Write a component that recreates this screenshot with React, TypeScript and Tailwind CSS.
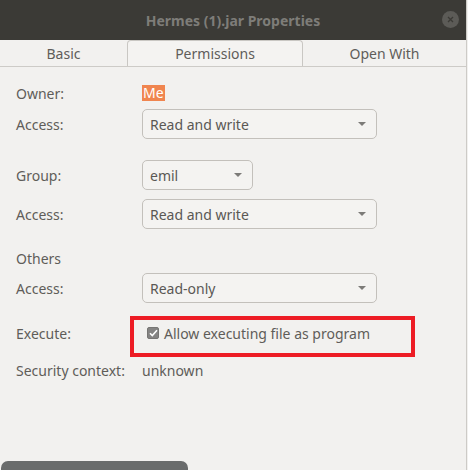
import React from 'react';

const font = { fontFamily: '"Noto Sans", "Open Sans", sans-serif' };

function Combo({ value, width }: { value: string; width: string }) {
  return (
    <div
      className={`${width} h-[30px] flex items-center justify-between pl-[7px] pr-[9px] rounded-[5px] border border-[#c3c0bb] bg-[#f4f3f1] text-[14px] text-[#5a5855]`}
    >
      <span>{value}</span>
      <svg width="10" height="6" viewBox="0 0 10 6">
        <path d="M1 1h8L5 5z" fill="#7c7b78" />
      </svg>
    </div>
  );
}

function Row({ label, children, className = '' }: { label: string; children?: React.ReactNode; className?: string }) {
  return (
    <div className={`relative flex items-center pl-4 ${className}`}>
      <span className="w-[126px] shrink-0 text-[14px] text-[#5f5d59]">{label}</span>
      {children}
    </div>
  );
}

export default function App() {
  return (
    <div className="w-[468px] h-[470px] flex bg-[#f2f1ef] overflow-hidden" style={font}>
      <div className="w-[466px] flex flex-col">
        <div className="h-[40px] shrink-0 bg-[#3b3a36] flex items-center justify-center relative">
          <span className="text-[14px] font-bold text-[#7e7d79]">Hermes (1).jar Properties</span>
          <div className="absolute right-[7px] top-[11px] w-[17px] h-[17px] rounded-full bg-[#5c5b57] flex items-center justify-center">
            <svg width="7" height="7" viewBox="0 0 7 7">
              <path d="M1 1l5 5M6 1l-5 5" stroke="#3b3a36" strokeWidth="1.3" />
            </svg>
          </div>
        </div>

        <div className="h-[27px] shrink-0 flex items-end border-b border-[#cdcbc7] text-[14px] text-[#5f5d5a]">
          <div className="w-[127px] h-[26px] flex items-center justify-center">Basic</div>
          <div className="w-[176px] h-[26px] flex items-center justify-center border border-b-0 border-[#c9c7c3] rounded-t-[4px] bg-[#f4f3f1]">
            Permissions
          </div>
          <div className="flex-1 h-[26px] flex items-center justify-center">Open With</div>
        </div>

        <div className="flex-1 flex flex-col">
          <Row label="Owner:" className="mt-[17px] h-[18px]">
            <span className="h-[16px] leading-[16px] px-[1px] bg-[#f0854f] text-white text-[14px]">Me</span>
          </Row>
          <Row label="Access:" className="mt-[7px] h-[30px]">
            <Combo value="Read and write" width="w-[235px]" />
          </Row>
          <Row label="Group:" className="mt-[21px] h-[30px]">
            <Combo value="emil" width="w-[111px]" />
          </Row>
          <Row label="Access:" className="mt-[9px] h-[30px]">
            <Combo value="Read and write" width="w-[235px]" />
          </Row>
          <Row label="Others" className="mt-[20px] h-[18px]" />
          <Row label="Access:" className="mt-[6px] h-[30px]">
            <Combo value="Read-only" width="w-[235px]" />
          </Row>
          <Row label="Execute:" className="mt-[21px] h-[18px]">
            <div className="flex items-center gap-[5px] ml-[5px]">
              <div className="w-[12px] h-[12px] rounded-[2px] bg-[#858483] border border-[#777674] flex items-center justify-center">
                <svg width="9" height="8" viewBox="0 0 9 8">
                  <path d="M1 4.2l2.3 2.3L8 1.3" stroke="#ffffff" strokeWidth="1.6" fill="none" />
                </svg>
              </div>
              <span className="text-[14px] text-[#5f5d59]">Allow executing file as program</span>
            </div>
            <div className="absolute left-[130px] top-[-8px] w-[285px] h-[41px] border-4 border-[#ed1c24]" />
          </Row>
          <Row label="Security context:" className="mt-[19px] h-[18px]">
            <span className="text-[14px] text-[#5f5d59]">unknown</span>
          </Row>

          <div className="mt-auto ml-[1px] w-[187px] h-[9px] rounded-t-[7px] bg-[#6a6c6c] overflow-hidden pl-[15px] pt-[4px]">
            <span className="text-[14px] text-white leading-none">Change Default Program</span>
          </div>
        </div>
      </div>
      <div className="w-[1px] bg-[#cdcbc7]" />
      <div className="w-[1px] bg-[#f2f1ef]" />
    </div>
  );
}
